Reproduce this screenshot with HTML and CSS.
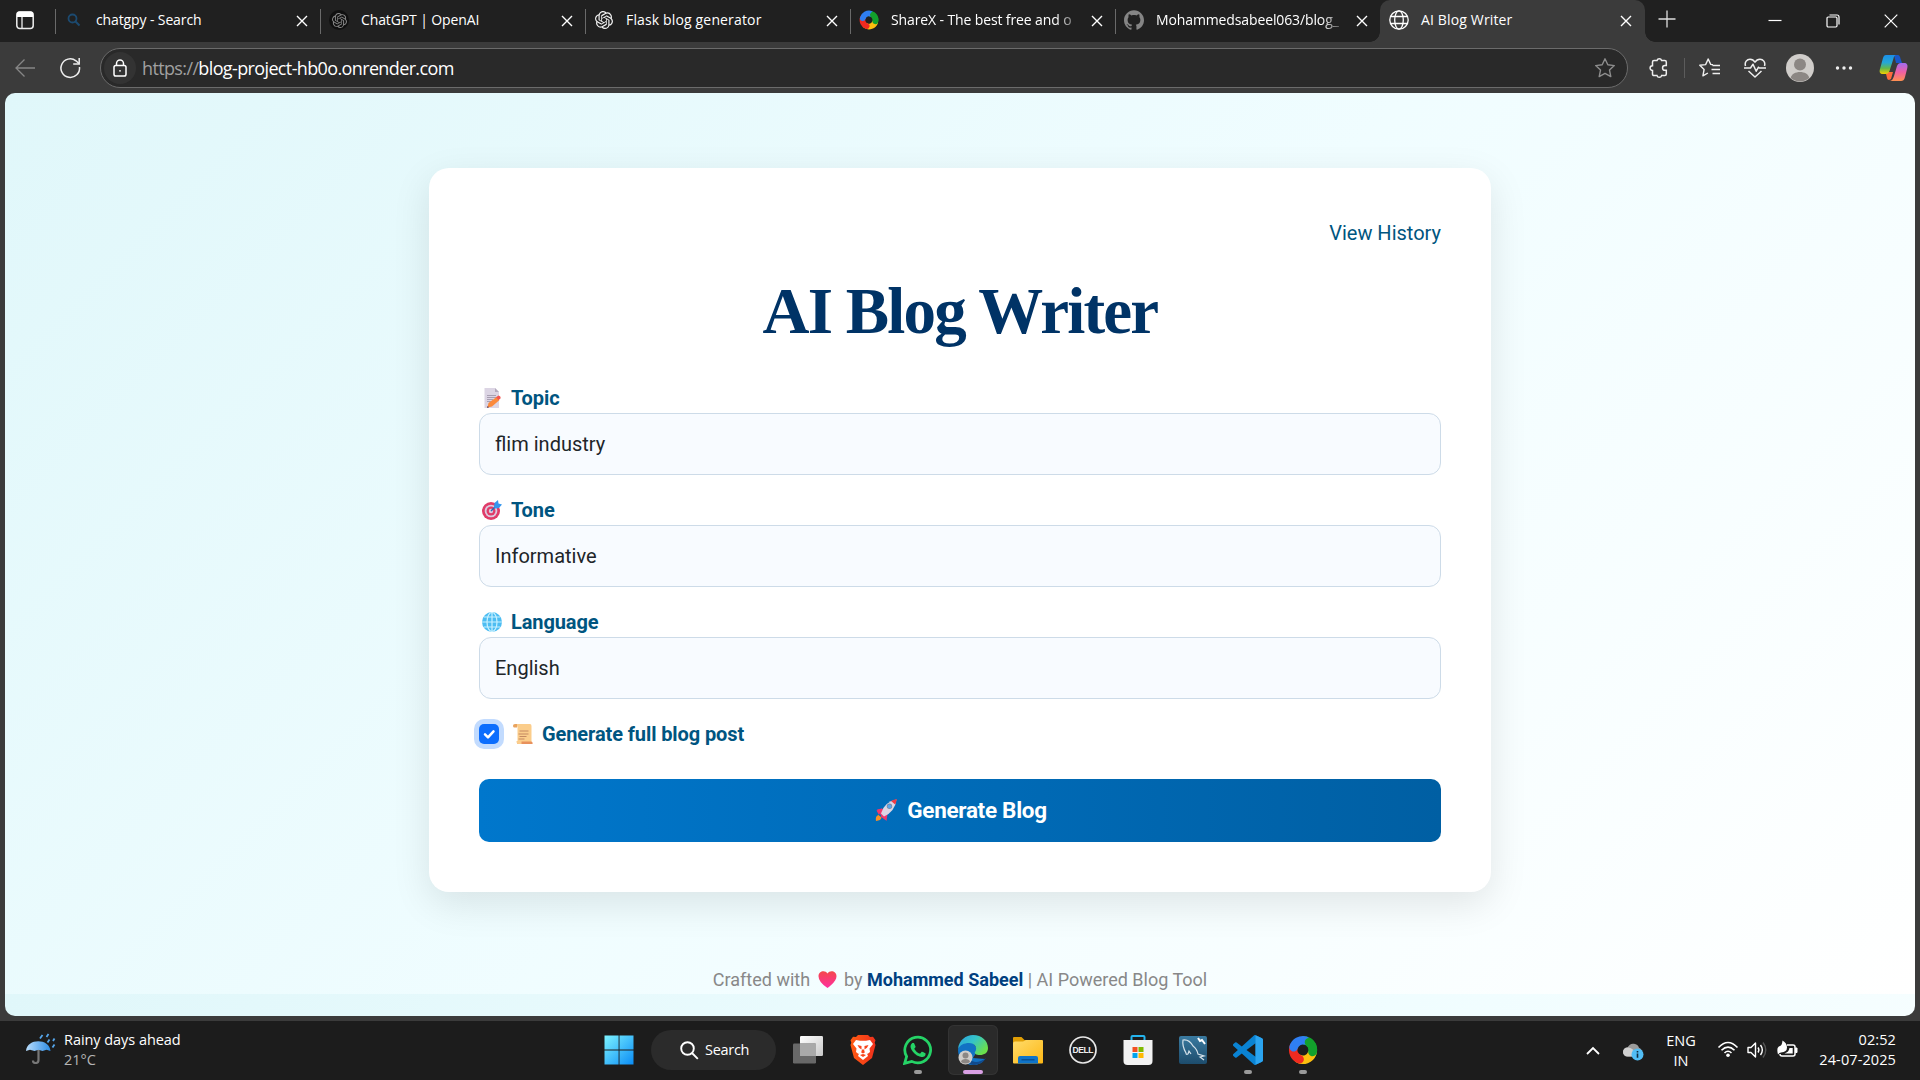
FILE: index.html
```html
<!DOCTYPE html>
<html lang="en">
<head>
<meta charset="utf-8">
<title>AI Blog Writer</title>
<link rel="stylesheet" href="styles.css">
</head>
<body>
<svg class="defs" aria-hidden="true">
  <defs>
    <linearGradient id="gWin" x1="0" y1="0" x2="1" y2="1"><stop offset="0" stop-color="#7df3ff"/><stop offset="1" stop-color="#0a8cf5"/></linearGradient>
    <linearGradient id="gFolder" x1="0" y1="0" x2="1" y2="1"><stop offset="0" stop-color="#ffdc6b"/><stop offset="1" stop-color="#fdb714"/></linearGradient>
    <linearGradient id="gEdgeTop" x1="0" y1="0" x2="1" y2=".6"><stop offset="0" stop-color="#2a9fe0"/><stop offset=".5" stop-color="#35c3c8"/><stop offset="1" stop-color="#6be04b"/></linearGradient>
    <linearGradient id="gCoA" x1="0" y1="0" x2="0" y2="1"><stop offset="0" stop-color="#1b8fe8"/><stop offset=".4" stop-color="#25a7d6"/><stop offset=".7" stop-color="#63b84a"/><stop offset="1" stop-color="#f5d000"/></linearGradient>
    <linearGradient id="gCoB" x1="0" y1="0" x2="0" y2="1"><stop offset="0" stop-color="#a26cf0"/><stop offset=".5" stop-color="#ef5fa4"/><stop offset="1" stop-color="#ff9050"/></linearGradient>
    <linearGradient id="gView" x1="0" y1="0" x2="1" y2="1"><stop offset="0" stop-color="#fff"/><stop offset="1" stop-color="#c8c8c8"/></linearGradient>
    <linearGradient id="gBrave" x1="0" y1="0" x2="1" y2="0"><stop offset="0" stop-color="#ff5b12"/><stop offset="1" stop-color="#f0301c"/></linearGradient>
    <linearGradient id="gHeart" x1="0" y1="0" x2="0" y2="1"><stop offset="0" stop-color="#f4474b"/><stop offset="1" stop-color="#ff2fa0"/></linearGradient>
    <linearGradient id="gUmb" x1="0" y1="0" x2="1" y2="0"><stop offset="0" stop-color="#b9dcfb"/><stop offset="1" stop-color="#2d8de6"/></linearGradient>
    <linearGradient id="gSql" x1="0" y1="0" x2="0" y2="1"><stop offset="0" stop-color="#3a7aa0"/><stop offset="1" stop-color="#1d4c6c"/></linearGradient>
    <symbol id="x" viewBox="0 0 12 12"><path d="M1 1l10 10M11 1L1 11" fill="none" stroke="currentColor" stroke-width="1.4"/></symbol>
    <symbol id="openai" viewBox="0 0 24 24"><path fill="currentColor" d="M22.2819 9.8211a5.9847 5.9847 0 0 0-.5157-4.9108 6.0462 6.0462 0 0 0-6.5098-2.9A6.0651 6.0651 0 0 0 4.9807 4.1818a5.9847 5.9847 0 0 0-3.9977 2.9 6.0462 6.0462 0 0 0 .7427 7.0966 5.98 5.98 0 0 0 .511 4.9107 6.051 6.051 0 0 0 6.5146 2.9001A5.9847 5.9847 0 0 0 13.2599 24a6.0557 6.0557 0 0 0 5.7718-4.2058 5.9894 5.9894 0 0 0 3.9977-2.9001 6.0557 6.0557 0 0 0-.7475-7.0729zm-9.022 12.6081a4.4755 4.4755 0 0 1-2.8764-1.0408l.1419-.0804 4.7783-2.7582a.7948.7948 0 0 0 .3927-.6813v-6.7369l2.02 1.1686a.071.071 0 0 1 .038.052v5.5826a4.504 4.504 0 0 1-4.4945 4.4944zm-9.6607-4.1254a4.4708 4.4708 0 0 1-.5346-3.0137l.142.0852 4.783 2.7582a.7712.7712 0 0 0 .7806 0l5.8428-3.3685v2.3324a.0804.0804 0 0 1-.0332.0615L9.74 19.9502a4.4992 4.4992 0 0 1-6.1408-1.6464zM2.3408 7.8956a4.485 4.485 0 0 1 2.3655-1.9728V11.6a.7664.7664 0 0 0 .3879.6765l5.8144 3.3543-2.0201 1.1685a.0757.0757 0 0 1-.071 0l-4.8303-2.7865A4.504 4.504 0 0 1 2.3408 7.872zm16.5963 3.8558L13.1038 8.364 15.1192 7.2a.0757.0757 0 0 1 .071 0l4.8303 2.7913a4.4944 4.4944 0 0 1-.6765 8.1042v-5.6772a.79.79 0 0 0-.407-.667zm2.0107-3.0231l-.142-.0852-4.7735-2.7818a.7759.7759 0 0 0-.7854 0L9.409 9.2297V6.8974a.0662.0662 0 0 1 .0284-.0615l4.8303-2.7866a4.4992 4.4992 0 0 1 6.6802 4.66zM8.3065 12.863l-2.02-1.1638a.0804.0804 0 0 1-.038-.0567V6.0742a4.4992 4.4992 0 0 1 7.3757-3.4537l-.142.0805L8.704 5.459a.7948.7948 0 0 0-.3927.6813zm1.0976-2.3654l2.602-1.4998 2.6069 1.4998v2.9994l-2.5974 1.4997-2.6067-1.4997Z"/></symbol>
    <symbol id="sharex" viewBox="0 0 30 30">
      <g fill="none" stroke-width="8.500">
        <path d="M15 5.200A9.800 9.800 0 0 1 23.500 19.900" stroke="#12a12c"/>
        <path d="M24.200 18.300A9.800 9.800 0 0 1 10.100 23.500" stroke="#fdbf0f" stroke-linecap="round"/>
        <path d="M11.600 24.200A9.800 9.800 0 0 1 5.800 11.600" stroke="#f02a20" stroke-linecap="round"/>
        <path d="M5.600 12.300A9.800 9.800 0 0 1 17.500 5.500" stroke="#2f7ff2" stroke-linecap="round"/>
        <path d="M21 7.200A9.800 9.800 0 0 1 24.500 17" stroke="#12a12c" stroke-linecap="round"/>
      </g>
    </symbol>
  </defs>
</svg>

<div class="browser">
  <header class="tabstrip">
    <div class="workspace"><svg width="20" height="20" viewBox="0 0 20 20"><rect x="1.800" y="2" width="16.400" height="16.500" rx="3" fill="none" stroke="#eee" stroke-width="1.500"/><path d="M2 3.500a2 2 0 0 1 2-2h12a2 2 0 0 1 2 2V7H2z" fill="#fff"/><path d="M7 7v11" stroke="#eee" stroke-width="1.300"/></svg></div>
    <div class="tab"><svg width="20" height="20" viewBox="0 0 20 20"><circle cx="8.500" cy="8.500" r="4" fill="none" stroke="#1c4a70" stroke-width="1.800"/><path d="M11.500 11.500l4 4" stroke="#1c4a70" stroke-width="2"/></svg><span class="tab-title">chatgpy - Search</span><svg class="close"><use href="#x"/></svg></div>
    <div class="tab"><span class="disc"><svg width="15" height="15"><use href="#openai"/></svg></span><span class="tab-title">ChatGPT | OpenAI</span><svg class="close"><use href="#x"/></svg></div>
    <div class="tab"><svg class="light" width="20" height="18"><use href="#openai"/></svg><span class="tab-title loose">Flask blog generator</span><svg class="close"><use href="#x"/></svg></div>
    <div class="tab"><svg width="20" height="20"><use href="#sharex"/></svg><span class="tab-title fade">ShareX - The best free and o</span><svg class="close"><use href="#x"/></svg></div>
    <div class="tab"><svg width="20" height="20" viewBox="0 0 24 24"><path fill="#858585" d="M12 .297c-6.630 0-12 5.373-12 12 0 5.303 3.438 9.800 8.205 11.385.6.113.82-.258.82-.577 0-.285-.01-1.040-.015-2.040-3.338.724-4.042-1.610-4.042-1.610C4.422 18.070 3.633 17.700 3.633 17.700c-1.087-.744.084-.729.084-.729 1.205.084 1.838 1.236 1.838 1.236 1.070 1.835 2.809 1.305 3.495.998.108-.776.417-1.305.76-1.605-2.665-.3-5.466-1.332-5.466-5.930 0-1.310.465-2.380 1.235-3.220-.135-.303-.54-1.523.105-3.176 0 0 1.005-.322 3.300 1.230.96-.267 1.980-.399 3-.405 1.020.006 2.040.138 3 .405 2.280-1.552 3.285-1.230 3.285-1.230.645 1.653.24 2.873.12 3.176.765.84 1.230 1.910 1.230 3.220 0 4.610-2.805 5.625-5.475 5.920.42.36.81 1.096.81 2.220 0 1.606-.015 2.896-.015 3.286 0 .315.21.69.825.57C20.565 22.092 24 17.592 24 12.297c0-6.627-5.373-12-12-12"/></svg><span class="tab-title fade">Mohammedsabeel063/blog_</span><svg class="close"><use href="#x"/></svg></div>
    <div class="tab active"><svg width="20" height="20" viewBox="0 0 20 20" fill="none" stroke="#fff" stroke-width="1.300"><circle cx="10" cy="10" r="9.200"/><ellipse cx="10" cy="10" rx="4.300" ry="9.200"/><path d="M1.800 6.500h16.400M1.800 13.500h16.400"/></svg><span class="tab-title loose">AI Blog Writer</span><svg class="close"><use href="#x"/></svg></div>
    <svg class="newtab" width="18" height="18" viewBox="0 0 18 18"><path d="M9 .5v17M.5 9h17" stroke="#ddd" stroke-width="1.300"/></svg>
    <div class="winctl">
      <svg width="14" height="14" viewBox="0 0 14 14"><path d="M.5 6.500h13" stroke="#fff" stroke-width="1.200"/></svg>
      <svg width="14" height="14" viewBox="0 0 14 14" fill="none" stroke="#fff" stroke-width="1.200"><rect x="1" y="3" width="10" height="10" rx="1.200"/><path d="M3.500 1h7.500a2 2 0 0 1 2 2v7.500"/></svg>
      <svg width="14" height="14" viewBox="0 0 14 14"><path d="M.7.700l12.600 12.600M13.300.700L.7 13.300" stroke="#fff" stroke-width="1.200"/></svg>
    </div>
  </header>

  <div class="toolbar">
    <svg class="back" width="22" height="20" viewBox="0 0 22 20"><path d="M21 10H2M10.500 1.500L2 10l8.500 8.500" fill="none" stroke="#868686" stroke-width="1.300"/></svg>
    <svg class="reload" width="22" height="22" viewBox="0 0 22 22" fill="none" stroke="#eee" stroke-width="1.500"><path d="M20.500 10a9.300 9.300 0 1 1-3.500-6.200L20 6.500"/><path d="M20.200 1v6h-6"/></svg>
    <div class="address">
      <span class="lock"><svg width="14" height="18" viewBox="0 0 14 18" fill="none" stroke="#fff" stroke-width="1.500"><rect x="1" y="6.500" width="12" height="10.500" rx="1.800"/><path d="M3.500 6.500V4.500a3.500 3.500 0 0 1 7 0v2"/><circle cx="7" cy="11.800" r=".9" fill="#fff" stroke="none"/></svg></span>
      <span class="url"><span class="scheme">https://</span>blog-project-hb0o.onrender.com</span>
      <svg class="star" width="22" height="22" viewBox="0 0 22 22"><path d="M11 1.800l2.800 6 6.500.800-4.800 4.500 1.300 6.500L11 16.400l-5.800 3.200 1.300-6.500L1.700 8.600l6.500-.800z" fill="none" stroke="#8d8d8d" stroke-width="1.400" stroke-linejoin="round"/></svg>
    </div>
    <div class="actions">
      <svg class="ext" width="22" height="22" viewBox="0 0 22 22"><path d="M6 3.500h3a2.400 2.400 0 0 1 4.600 0h3.200a1.500 1.500 0 0 1 1.500 1.500v3.600h-1.400a2.300 2.300 0 0 0 0 4.700h1.400v3.800a1.500 1.500 0 0 1-1.500 1.500h-3.200a2.400 2.400 0 0 1-4.600 0H6A1.500 1.500 0 0 1 4.500 17v-3.500a2.400 2.400 0 0 1 0-4.800V5A1.500 1.500 0 0 1 6 3.500z" fill="none" stroke="#eee" stroke-width="1.500"/></svg>
      <i class="bar"></i>
      <svg class="favs" width="22" height="22" viewBox="0 0 22 22" fill="none" stroke="#eee" stroke-width="1.400" stroke-linejoin="round"><path d="M14 7.700l-2.300-.300-2.500-5.400-2.600 5.600-5.800.700 4.300 4.200-1.200 6.400 5-2.900"/><path d="M13.500 8.500h7.500M12.500 12.500H21M13.500 16.500h7.500"/></svg>
      <svg class="health" width="24" height="20" viewBox="0 0 24 20" fill="none" stroke="#eee" stroke-width="1.500" stroke-linejoin="round"><path d="M2.500 8C1.300 4 4 1.200 7 1.200c2.300 0 4 1.300 5 3 1-1.700 2.700-3 5-3 3 0 5.700 2.800 4.500 6.800M5.500 13l6.500 6 6.500-6"/><path d="M1 10h6.500L10 6.200l3.200 7 2.300-4 .8.800H23"/></svg>
      <svg class="avatar" width="28" height="28" viewBox="0 0 28 28"><circle cx="14" cy="14" r="14" fill="#d0cdca"/><circle cx="14" cy="10.500" r="6" fill="#8c8784"/><path d="M4.800 24c1-8 17.400-8 18.400 0a14 14 0 0 1-18.400 0z" fill="#8c8784"/></svg>
      <svg class="more" width="18" height="6" viewBox="0 0 18 6" fill="#eee"><circle cx="2.500" cy="3" r="1.700"/><circle cx="9" cy="3" r="1.700"/><circle cx="15.500" cy="3" r="1.700"/></svg>
      <svg class="copilot" width="29" height="28" viewBox="0 0 29 28"><path d="M15 1h3c3 0 3 2 4 5l1 3h-6z" fill="#1957c9"/><path d="M8 18h6l-2 7-2 1c-2 0-2-3-3-6z" fill="#ff6a3c"/><path d="M7 1h11c-3 0-3 2-4 5l-3.500 11c-.800 2-2 3-4 3H4c-3 0-4-2-3-5L4 4c.6-2 1.500-3 3-3z" fill="url(#gCoA)"/><path d="M22 27H10c3 0 4-2 5-5l3-10c.8-2 2-3 4-3h3c3 0 4 2 3.300 5L26 23c-.800 3-2 4-4 4z" fill="url(#gCoB)"/></svg>
    </div>
  </div>

  <main class="page">
    <section class="card">
      <a class="history">View History</a>
      <h1>AI Blog Writer</h1>
      <div class="field">
        <label><svg width="20" height="20" viewBox="0 0 20 20"><path d="M2.500 0H13l4 4v16H2.500z" fill="#dcd5e4"/><path d="M13 0l4 4h-4z" fill="#b3a9bd"/><path d="M5 7.500h9M5 9.500h9M5 11.500h6M5 13.500h5" stroke="#a89fb2"/><path d="M5.500 19.500l1-4.500 8-6 3 3-7.500 6.500z" fill="#fb8a3c"/><path d="M14 9.300l2.500-1.800q2.500.500 2 3l-2 1.500z" fill="#f4534e"/><path d="M5 20l.5-2 1.600 1.300z" fill="#5a3c50"/></svg>Topic</label>
        <input type="text" value="flim industry">
      </div>
      <div class="field">
        <label><svg width="20" height="20" viewBox="0 0 20 20"><circle cx="9" cy="11" r="9" fill="#e03c69"/><circle cx="9" cy="11" r="6.300" fill="#dccbe0"/><circle cx="9" cy="11" r="4.500" fill="#e03c69"/><circle cx="9" cy="11" r="2.200" fill="#dccbe0"/><path d="M9 11l6-6" stroke="#256bb5" stroke-width="1.400"/><path d="M12 7l.5-4L16 0l.5 3.500L20 4.500 17 8l-4 .500z" fill="#3496ee"/></svg>Tone</label>
        <input type="text" value="Informative">
      </div>
      <div class="field">
        <label><svg width="20" height="20" viewBox="0 0 20 20"><circle cx="10" cy="10" r="10" fill="#4dbdf2"/><g fill="none" stroke="#c8f1ff" stroke-width="1.200"><ellipse cx="10" cy="10" rx="5" ry="9.500"/><path d="M10 0v20M0 10h20M2 5h16M2 15h16"/></g></svg>Language</label>
        <input type="text" value="English">
      </div>
      <div class="check">
        <span class="box"><svg width="20" height="20" viewBox="0 0 20 20"><path d="M6 10.300l3 3 5.500-6" fill="none" stroke="#fff" stroke-width="2.500" stroke-linecap="round" stroke-linejoin="round"/></svg></span>
        <label><svg width="20" height="20" viewBox="0 0 20 20"><path d="M3 0h14q1.500 0 1.500 2v16H4.500V3z" fill="#fbcd8b"/><path d="M0 1.500Q0 0 2 0h2v3.500H1Q0 3.500 0 1.500z" fill="#e9a35e"/><path d="M6.500 7h9M5.500 10h10M6.500 12.500h7M5.500 15h6" stroke="#c58a63" stroke-width="1.100"/><path d="M4 17.500h14q2 0 1.500 2.500H5.500q-2 0-1.500-2.500z" fill="#e8915c"/><path d="M3.500 17h5v3h-3q-2 0-2-3z" fill="#fbcd8b"/></svg>Generate full blog post</label>
      </div>
      <button class="generate" type="button"><svg width="22" height="22" viewBox="0 0 22 22"><path d="M1 22q-1-5 2.500-6l3 2.500Q6 21.500 1 22z" fill="#fd9024"/><path d="M7 9.500L1.500 11.500l2.500 4.500zM12 15l-1.500 6-5-3.500z" fill="#f0376b"/><path d="M2 10.500l5-1 5.500 5L11.500 22 6 16.500z" fill="#f0376b"/><path d="M6 14.500Q9 3 21.500 .5 20 12.500 9 17.500z" fill="#dcd5e4"/><path d="M16 2Q19 .500 21.800 0q-.3 3-1.600 5.500z" fill="#ee3b45"/><circle cx="14.500" cy="7.300" r="2.700" fill="#7a8aa8"/><circle cx="14.500" cy="7.300" r="1.900" fill="#59a7ee"/></svg>Generate Blog</button>
    </section>
    <footer class="credit">Crafted with <svg width="19" height="17" viewBox="0 0 18 17"><path d="M9 17Q0 11 0 5.200C0 0 6.500-1.500 9 2.500 11.500-1.500 18 0 18 5.200 18 11 9 17 9 17z" fill="url(#gHeart)"/></svg> by <strong>Mohammed Sabeel</strong> | AI Powered Blog Tool</footer>
  </main>
</div>

<div class="taskbar">
  <div class="weather">
    <svg width="30" height="31" viewBox="0 0 30 31"><path d="M12.500 16v11q0 3-2.800 3T7 27.500" fill="none" stroke="#777" stroke-width="2.200"/><path d="M0 18C1 5 23.500 5 24.500 18l-4-1.300-4 1.300-4-1.300-4 1.300-4.500-1.300z" fill="url(#gUmb)"/><path d="M16.500 2l-2.500 3.500M22.500 1l-2 3M23.500 6.500l-2 3M28.500 5.500l-1.500 2.500M28.500 11.500l-2 3" stroke="#55a5ea" stroke-width="1.800"/></svg>
    <div class="weather-text"><span>Rainy days ahead</span><span class="dim">21°C</span></div>
  </div>
  <div class="apps">
    <span class="app"><svg width="30" height="30" viewBox="0 0 30 30"><path d="M.5.500H14.600V14.600H.5zM15.500.500H29.500V14.600H15.500zM.5 15.500H14.600V29.500H.5zM15.500 15.500H29.500V29.500H15.500z" fill="url(#gWin)"/></svg></span>
    <span class="search"><svg width="19" height="19" viewBox="0 0 19 19" fill="none" stroke="#fff" stroke-width="1.900"><circle cx="7.500" cy="7.500" r="6.300"/><path d="M12 12l5.800 5.800"/></svg><span>Search</span></span>
    <span class="app"><svg width="30" height="30" viewBox="0 0 30 30"><rect x="7" y="1" width="23" height="20" rx="1.200" fill="url(#gView)"/><rect y="8.500" width="23" height="20" rx="1.200" fill="#686868"/><path d="M7 8.500h16V21H7z" fill="#a9a9a9"/></svg></span>
    <span class="app"><svg width="26" height="30" viewBox="0 0 26 30"><path d="M6 2l2-2h10l2 2 3-.300 2.500 3.500-.800 2.500L25.500 10l-3.500 13L13 30 4 23 .5 10l.8-2.300-.8-2.500L3 1.700z" fill="url(#gBrave)"/><path d="M6 5l4 .800h6L20 5l3 4-3.500 4.500.500 3.500-2.500 2-1-1.500 1.500 3.500-5 4-5-4 1.500-3.500-1 1.500L6 17l.5-3.500L3 9z" fill="#fff"/><path d="M7.500 10l4 1v3.500L9 12.800zM18.500 10l-4 1v3.500l2.500-1.700zM12 14.500h2l.8 3L13 18.500l-1.800-1zM10 20l3 2 3-2-3-1z" fill="#f8441a"/></svg></span>
    <span class="app"><svg width="30" height="30" viewBox="0 0 24 24"><path d="M1.300 22.700l1.600-5.500A10.300 10.300 0 1 1 7 21.100z" fill="none" stroke="#25d366" stroke-width="2.200"/><path fill="#25d366" d="M17.472 14.382c-.297-.149-1.758-.867-2.030-.967-.273-.099-.471-.148-.67.15-.197.297-.767.966-.94 1.164-.173.199-.347.223-.644.075-.297-.15-1.255-.463-2.390-1.475-.883-.788-1.480-1.761-1.653-2.059-.173-.297-.018-.458.13-.606.134-.133.298-.347.446-.52.149-.174.198-.298.298-.497.099-.198.05-.371-.025-.52-.075-.149-.669-1.612-.916-2.207-.242-.579-.487-.5-.669-.51-.173-.008-.371-.01-.57-.01-.198 0-.52.074-.792.372-.272.297-1.040 1.016-1.040 2.479 0 1.462 1.065 2.875 1.213 3.074.149.198 2.096 3.200 5.077 4.487.709.306 1.262.489 1.694.625.712.227 1.360.195 1.871.118.571-.085 1.758-.719 2.006-1.413.248-.694.248-1.289.173-1.413-.074-.124-.272-.198-.57-.347"/></svg><i class="run"></i></span>
    <span class="app current"><svg width="30" height="30" viewBox="0 0 30 30"><path d="M0 15C1 7 9 4 15 8l5 7-5 8 12 1q-4 6-12 6C6 30 0 23 0 15z" fill="#1272c4"/><path d="M10 19c0 8 9 11 18 4-3 5-8 7-13 7-5-1-8-6-5-11z" fill="#114a8b"/><path d="M0 14C1 5 8 0 15 0c9 0 15 6 15 13 0 5-4 7-8 7-4 0-6-1.500-5-3 3-4 0-9-6-9-5 0-9 2-11 6z" fill="url(#gEdgeTop)"/><circle cx="7.500" cy="22.500" r="7" fill="#d0cdca"/><circle cx="7.500" cy="20.500" r="3" fill="#8c8784"/><path d="M3 27c0-4 9-4 9 0q-4.500 3-9 0z" fill="#8c8784"/></svg><i class="run wide"></i></span>
    <span class="app"><svg width="30" height="30" viewBox="0 0 30 30"><path d="M0 3q0-1 1-1h7.500l3 3H20v4H0z" fill="#e09e05"/><path d="M0 8.500q0-2 2-2h8L13 5h16q1 0 1 1v21.500q0 1-1 1H1q-1 0-1-1z" fill="url(#gFolder)"/><path d="M5 28.500V23q0-2 2-2h16q2 0 2 2v5.500z" fill="#0f74c9"/><path d="M8.500 24.800h13" stroke="#07498a" stroke-width="1.200"/></svg></span>
    <span class="app"><svg width="30" height="30" viewBox="0 0 30 30"><circle cx="15" cy="15" r="13" fill="none" stroke="#e8e8e8" stroke-width="1.700"/><text class="dell" x="15" y="18.300" text-anchor="middle" textLength="21">DELL</text></svg></span>
    <span class="app"><svg width="30" height="30" viewBox="0 0 30 30"><path d="M8.500 7V2q0-1 1-1h11q1 0 1 1v5" fill="none" stroke="#24b4ee" stroke-width="2"/><path d="M.5 5h29v21q0 4-4 4H4.500q-4 0-4-4z" fill="#f2f2f2"/><path d="M9.500 12h5v5h-5z" fill="#f25022"/><path d="M15.500 12h5v5h-5z" fill="#7fba00"/><path d="M9.500 18h5v5h-5z" fill="#00a4ef"/><path d="M15.500 18h5v5h-5z" fill="#ffb900"/></svg></span>
    <span class="app"><svg width="30" height="30" viewBox="0 0 30 30"><rect x="1" y="1" width="28" height="28" rx="2" fill="url(#gSql)"/><path d="M10 19q-2 1-2-1-4-7-3-13 6-1 10 6 4 3 5 8l6 2-4 1 4 3M10 19l1-3 2 3" fill="none" stroke="#d5e2ea" stroke-width="1.200"/><path d="M20 3l2 3 2-1 3 4" fill="none" stroke="#fff" stroke-width="2"/></svg></span>
    <span class="app"><svg width="30" height="30" viewBox="0 0 24 24"><path fill="#0a83d3" d="M23.150 2.587L18.210.21a1.494 1.494 0 0 0-1.705.29l-9.460 8.630-4.120-3.128a.999.999 0 0 0-1.276.057L.327 7.261A1 1 0 0 0 .326 8.740L3.899 12 .326 15.260a1 1 0 0 0 .001 1.479L1.650 17.940a.999.999 0 0 0 1.276.057l4.120-3.128 9.460 8.630a1.492 1.492 0 0 0 1.704.29l4.942-2.377A1.500 1.500 0 0 0 24 20.060V3.939a1.500 1.500 0 0 0-.85-1.352zm-5.146 14.861L10.826 12l7.178-5.448v10.896z"/><path d="M18 .2l5.200 2.400q.8.400.8 1.400v16q0 1-.8 1.400L18 23.800z" fill="#2ba4f0"/></svg><i class="run"></i></span>
    <span class="app"><svg width="30" height="30"><use href="#sharex"/></svg><i class="run"></i></span>
  </div>
  <div class="tray">
    <svg class="chev" width="14" height="9" viewBox="0 0 14 9"><path d="M1 8l6-6 6 6" fill="none" stroke="#fff" stroke-width="1.800"/></svg>
    <svg class="cloud" width="21" height="18" viewBox="0 0 21 18"><path d="M4.500 13.500a4.500 4.500 0 0 1 0-9Q7 0 11 .8q4 .5 5 4 3 1 3 4.500 0 4.200-4 4.200z" fill="#9b9b9b"/><path d="M4.500 13.500a4.500 4.500 0 0 1 0-9q3-.5 6 2.500l3 6.500z" fill="#d0d0d0"/><circle cx="14.500" cy="11.500" r="6" fill="#51bdf5"/><path d="M14.500 8v1.500M14.500 10.600v4.200" stroke="#102d40" stroke-width="1.600"/></svg>
    <div class="lang"><span>ENG</span><span>IN</span></div>
    <svg class="wifi" width="22" height="17" viewBox="0 0 22 17" fill="none" stroke="#fff" stroke-width="1.600"><path d="M1.500 6.500Q11-3.500 20.500 6.500M4.500 9.300q6.500-6.500 13 0M7.500 12q3.500-3.500 7 0"/><circle cx="11" cy="14.300" r="1.800" fill="#fff" stroke="none"/></svg>
    <svg class="vol" width="21" height="18" viewBox="0 0 21 18" fill="none" stroke="#fff" stroke-width="1.400" stroke-linejoin="round"><path d="M1 6.500h3L8.500 2v14L4 11.500H1z"/><path d="M11 6.500q1.800 2.500 0 5M13.500 4q3.700 5 0 10"/><path d="M16 1.500q5.500 7.500 0 15" stroke="#555"/></svg>
    <svg class="bat" width="21" height="18" viewBox="0 0 21 18"><path d="M10 5h6q2 0 2 2v7q0 2-2 2H5q-2 0-2-2" fill="none" stroke="#fff" stroke-width="1.500"/><path d="M18.500 8H20v4.500h-1.500z" fill="#fff" stroke="#fff"/><path d="M12.500 8h3.200v5.500H7.500Q12 12 12.500 8z" fill="#fff"/><path d="M1 14.500Q-1 7 3 6q2-.500 2.500-5.500Q10 3 10 7.500T4 12.500Q2.500 12.700 1 14.500z" fill="#fff"/></svg>
    <div class="clock"><span>02:52</span><span>24-07-2025</span></div>
  </div>
</div>
</body>
</html>
```
FILE: styles.css
```css
* { box-sizing: border-box; }

body {
  margin: 0;
  width: 1920px;
  height: 1080px;
  display: flex;
  flex-direction: column;
  overflow: hidden;
  background: #3b3b3b;
  font-family: "Open Sans", "Noto Sans", sans-serif;
  color: #fff;
}

svg { display: block; flex: none; }
.defs { width: 0; height: 0; overflow: hidden; position: absolute; }

.browser {
  height: 1021px;
  display: flex;
  flex-direction: column;
  padding: 0 5px 5px;
}

/* Tab strip */
.tabstrip {
  height: 42px;
  margin: 0 -5px;
  display: flex;
  background: #202020;
  flex: none;
}
.workspace { width: 55px; padding: 10px 0 0 15px; }
.tab {
  position: relative;
  width: 265px;
  height: 42px;
  padding: 0 12px 2px 9px;
  display: flex;
  align-items: center;
  gap: 12px;
}
.tab::before {
  content: "";
  position: absolute;
  left: 0;
  top: 9px;
  width: 1px;
  height: 25px;
  background: #6a6a6a;
}
.tab-title {
  flex: 1;
  min-width: 0;
  white-space: nowrap;
  font-size: 14px;
  line-height: 22px;
  letter-spacing: -.12px;
}
.loose { letter-spacing: .15px; }
.fade {
  -webkit-mask-image: linear-gradient(to right, #000 165px, transparent 192px);
  mask-image: linear-gradient(to right, #000 165px, transparent 192px);
}
.close { width: 12px; height: 12px; margin-top: 2px; }
.light { color: #f2f2f2; }
.disc {
  width: 20px;
  height: 20px;
  border-radius: 50%;
  background: #101010;
  color: #888;
  display: grid;
  place-items: center;
}
.active { padding-right: 13px; background: #3b3b3b; border-radius: 10px 10px 0 0; }
.active::before,
.active::after {
  content: "";
  position: absolute;
  left: -10px;
  top: auto;
  bottom: 0;
  width: 10px;
  height: 10px;
  background: radial-gradient(circle at 0 0, #202020 9.5px, #3b3b3b 10px);
}
.active::after {
  left: auto;
  right: -10px;
  background: radial-gradient(circle at 100% 0, #202020 9.5px, #3b3b3b 10px);
}
.newtab { margin: 10px 0 0 13px; }
.winctl {
  margin: 14px 22px 0 auto;
  display: flex;
  gap: 44px;
}

/* Toolbar */
.toolbar {
  height: 51px;
  flex: none;
  display: flex;
  align-items: center;
  padding: 0 2px 0 9px;
}
.reload { margin-left: 23px; }
.address {
  width: 1528px;
  height: 40px;
  margin-left: 19px;
  padding: 0 11px 0 3px;
  display: flex;
  align-items: center;
  border: 1px solid #6b6b6b;
  border-radius: 20px;
  background: #292929;
}
.lock {
  width: 32px;
  height: 32px;
  border-radius: 50%;
  background: #333;
  display: grid;
  place-items: center;
}
.url {
  flex: 1;
  margin-left: 6px;
  font-size: 18px;
  line-height: 24px;
  letter-spacing: -.63px;
}
.scheme { color: #a0a0a0; }
.actions {
  flex: 1;
  display: flex;
  align-items: center;
}
.ext { margin-left: 20px; }
.bar { width: 1px; height: 20px; margin: 0 14px; background: #5c5c5c; }
.health { margin-left: 22px; }
.avatar { margin-left: 19px; }
.more { margin-left: 21px; }
.copilot { margin-left: 26px; }

/* Web page */
.page {
  flex: 1;
  overflow: hidden;
  border-radius: 10px;
  padding-top: 75px;
  background: linear-gradient(135deg, #e0f7fa 0%, #f0fdff 50%, #ffffff 100%) 0 0 / 100% 901px repeat;
  font-family: Roboto, sans-serif;
  color: #212529;
}
.card {
  width: 1062px;
  height: 724px;
  margin: 0 auto;
  padding: 50px;
  display: flex;
  flex-direction: column;
  background: #fff;
  border-radius: 20px;
  box-shadow: 0 12px 38px rgba(0, 0, 0, .1);
}
.history {
  align-self: flex-end;
  font-size: 20px;
  line-height: 30px;
  color: #005580;
}
h1 {
  margin: 27px 0 0;
  height: 87px;
  font: bold 65px/72px "Liberation Serif", serif;
  letter-spacing: -1.8px;
  text-align: center;
  color: #003366;
}
.field { height: 112px; padding-top: 21px; }
label {
  display: flex;
  align-items: center;
  gap: 9px;
  height: 30px;
  padding-left: 3px;
  font-size: 20px;
  font-weight: 700;
  letter-spacing: -.1px;
  color: #005580;
}
input {
  display: block;
  width: 100%;
  height: 62px;
  padding: 0 15px;
  border: 1px solid #cddbe8;
  border-radius: 12px;
  background: #f8fbff;
  font: 20px Roboto, sans-serif;
  color: #212529;
}
.check {
  display: flex;
  align-items: center;
  gap: 11px;
  margin-top: 21px;
}
.box {
  width: 20px;
  height: 20px;
  border-radius: 5px;
  background: #0d6efd;
  box-shadow: 0 0 0 5px #c2dbfe;
}
.generate {
  height: 63px;
  margin-top: 30px;
  padding: 0 0 1px 2px;
  display: flex;
  align-items: center;
  justify-content: center;
  gap: 10px;
  border: 0;
  border-radius: 10px;
  background: linear-gradient(to right, #0077cc, #005fa3);
  font: bold 22.5px Roboto, sans-serif;
  letter-spacing: -.3px;
  color: #fff;
}
.credit {
  margin-top: 73px;
  font-size: 18px;
  line-height: 29px;
  text-align: center;
  color: #888;
}
.credit svg { display: inline-block; vertical-align: -2px; margin: 0 3px; }
.credit strong { color: #004080; }

/* Taskbar */
.taskbar {
  height: 59px;
  display: grid;
  grid-template-columns: 591px 1fr auto;
  background: #1c1c1c;
  font-size: 14.5px;
  line-height: 20px;
}
.taskbar span { white-space: nowrap; }
.weather { display: flex; gap: 8px; padding: 12px 0 0 26px; }
.weather-text,
.lang,
.clock { display: flex; flex-direction: column; }
.weather-text { margin-top: -3px; letter-spacing: -.05px; }
.dim { color: #b5b5b5; }
.apps { display: flex; padding-top: 4px; }
.app {
  position: relative;
  width: 50px;
  height: 50px;
  margin: 0 2.5px;
  display: grid;
  place-items: center;
  border-radius: 6px;
}
.current { background: #2a2a2a; box-shadow: inset 0 0 0 1px #333; }
.run {
  position: absolute;
  bottom: 1px;
  left: 21px;
  width: 8px;
  height: 4px;
  border-radius: 2px;
  background: #9a9a9a;
}
.wide { left: 15px; width: 20px; background: #d9a0e4; }
.search {
  width: 125px;
  height: 40px;
  margin: 5px 4px 0 5px;
  display: flex;
  align-items: center;
  gap: 6px;
  padding-left: 29px;
  border-radius: 20px;
  background: #2b2b2b;
  letter-spacing: -.3px;
}
.dell {
  font: bold 8.5px "Liberation Sans", sans-serif;
  fill: #eee;
}
.tray { display: flex; padding-right: 24px; }
.chev { margin-top: 25px; }
.cloud { margin: 22px 0 0 23px; }
.lang { width: 32px; margin: 10px 0 0 21px; align-items: center; }
.wifi { margin: 20px 0 0 20px; }
.vol { margin: 20px 0 0 8px; }
.bat { margin: 19px 0 0 9px; }
.clock { width: 78px; margin: 9px 0 0 20px; align-items: flex-end; letter-spacing: .1px; }
```
